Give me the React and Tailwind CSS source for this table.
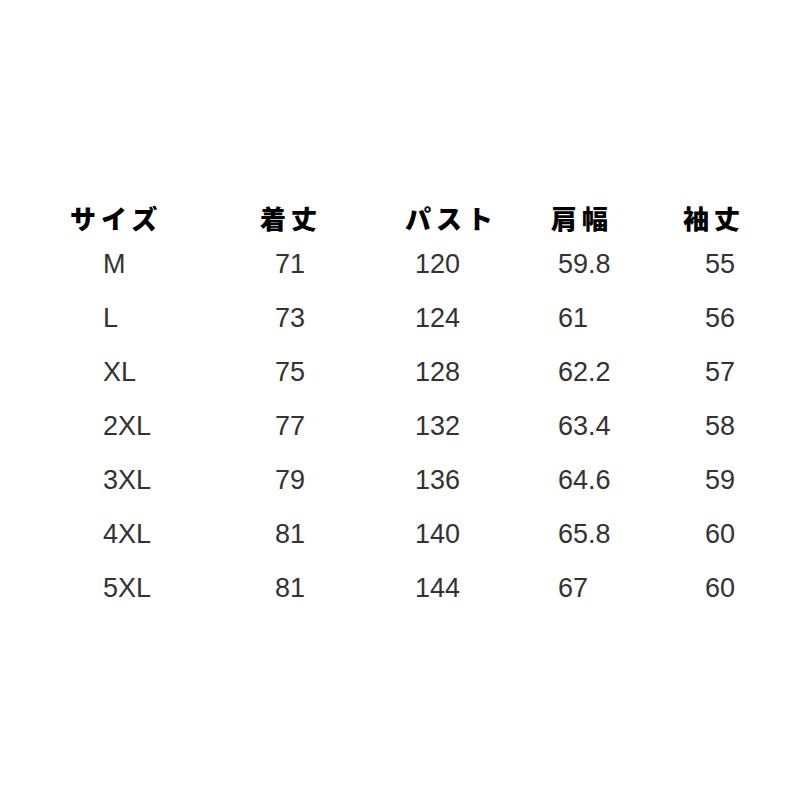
const headers = ["サイズ", "着丈", "パスト", "肩幅", "袖丈"];

const rows = [
  ["M", "71", "120", "59.8", "55"],
  ["L", "73", "124", "61", "56"],
  ["XL", "75", "128", "62.2", "57"],
  ["2XL", "77", "132", "63.4", "58"],
  ["3XL", "79", "136", "64.6", "59"],
  ["4XL", "81", "140", "65.8", "60"],
  ["5XL", "81", "144", "67", "60"],
];

// value indent inside each column, matching the chart
const indents = ["pl-[33px]", "pl-[15px]", "pl-[10px]", "pl-[7px]", "pl-[22px]"];

function App() {
  return (
    <div className="w-[800px] h-[800px] bg-white pt-[197px] pl-[70px]">
      <div className="grid grid-cols-[190px_145px_146px_132px_80px]">
        {headers.map((h) => (
          <div
            key={h}
            className="h-[40px] flex items-center text-[26px] font-black tracking-[5px] text-black whitespace-nowrap"
            style={{ fontFamily: '"Noto Sans CJK JP", sans-serif' }}
          >
            {h}
          </div>
        ))}

        {rows.map((row) =>
          row.map((cell, i) => (
            <div
              key={row[0] + i}
              className={`h-[54px] flex items-center text-[27px] text-[#333333] font-['Liberation_Sans',Arial,sans-serif] ${indents[i]}`}
            >
              {cell}
            </div>
          ))
        )}
      </div>
    </div>
  );
}

export default App;
